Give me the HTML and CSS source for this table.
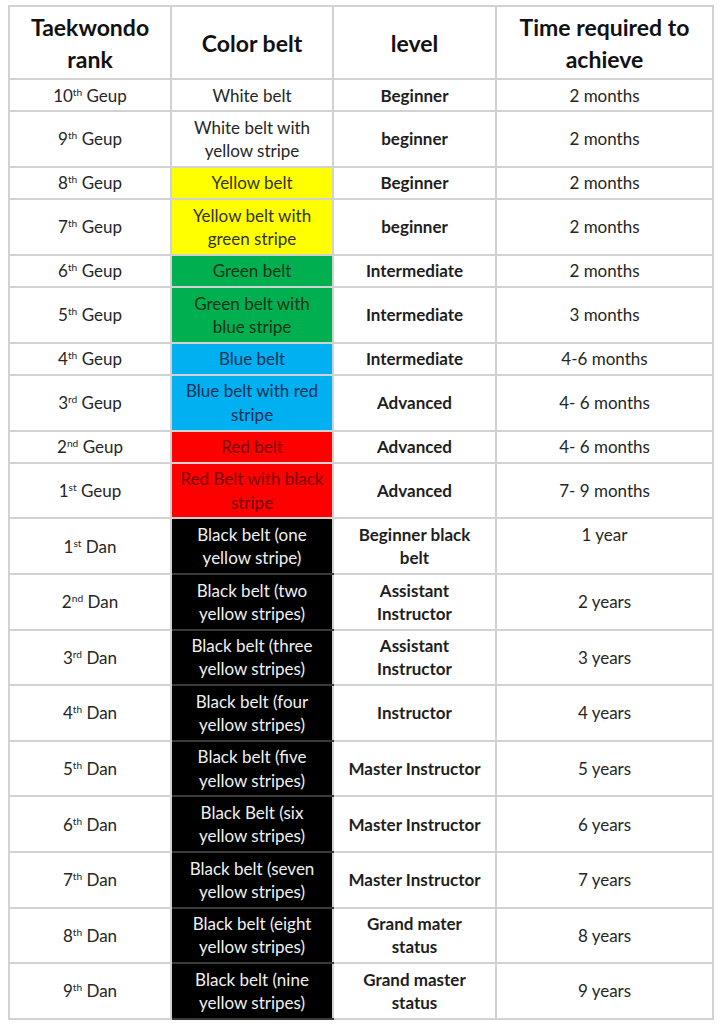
FILE: index.html
```html
<!DOCTYPE html>
<html lang="en">
<head>
<meta charset="utf-8">
<title>Taekwondo belt ranks</title>
<link rel="stylesheet" href="styles.css">
</head>
<body>
<table class="ranks">
  <colgroup>
    <col class="c-rank">
    <col class="c-belt">
    <col class="c-level">
    <col class="c-time">
  </colgroup>
  <thead>
    <tr>
      <th>Taekwondo<br>rank</th>
      <th>Color belt</th>
      <th>level</th>
      <th>Time required to<br>achieve</th>
    </tr>
  </thead>
  <tbody>
    <tr><td>10<sup>th</sup> Geup</td><td class="belt">White belt</td><td class="lvl">Beginner</td><td>2 months</td></tr>
    <tr><td>9<sup>th</sup> Geup</td><td class="belt">White belt with<br>yellow stripe</td><td class="lvl">beginner</td><td>2 months</td></tr>
    <tr><td>8<sup>th</sup> Geup</td><td class="belt yellow">Yellow belt</td><td class="lvl">Beginner</td><td>2 months</td></tr>
    <tr><td>7<sup>th</sup> Geup</td><td class="belt yellow">Yellow belt with<br>green stripe</td><td class="lvl">beginner</td><td>2 months</td></tr>
    <tr><td>6<sup>th</sup> Geup</td><td class="belt green">Green belt</td><td class="lvl">Intermediate</td><td>2 months</td></tr>
    <tr><td>5<sup>th</sup> Geup</td><td class="belt green">Green belt with<br>blue stripe</td><td class="lvl">Intermediate</td><td>3 months</td></tr>
    <tr><td>4<sup>th</sup> Geup</td><td class="belt blue">Blue belt</td><td class="lvl">Intermediate</td><td>4-6 months</td></tr>
    <tr><td>3<sup>rd</sup> Geup</td><td class="belt blue">Blue belt with red<br>stripe</td><td class="lvl">Advanced</td><td>4- 6 months</td></tr>
    <tr><td>2<sup>nd</sup> Geup</td><td class="belt red">Red belt</td><td class="lvl">Advanced</td><td>4- 6 months</td></tr>
    <tr><td>1<sup>st</sup> Geup</td><td class="belt red">Red Belt with black<br>stripe</td><td class="lvl">Advanced</td><td>7- 9 months</td></tr>
    <tr><td>1<sup>st</sup> Dan</td><td class="belt black">Black belt (one<br>yellow stripe)</td><td class="lvl">Beginner black<br>belt</td><td class="top">1 year</td></tr>
    <tr><td>2<sup>nd</sup> Dan</td><td class="belt black">Black belt (two<br>yellow stripes)</td><td class="lvl">Assistant<br>Instructor</td><td>2 years</td></tr>
    <tr><td>3<sup>rd</sup> Dan</td><td class="belt black">Black belt (three<br>yellow stripes)</td><td class="lvl">Assistant<br>Instructor</td><td>3 years</td></tr>
    <tr><td>4<sup>th</sup> Dan</td><td class="belt black">Black belt (four<br>yellow stripes)</td><td class="lvl">Instructor</td><td>4 years</td></tr>
    <tr><td>5<sup>th</sup> Dan</td><td class="belt black">Black belt (five<br>yellow stripes)</td><td class="lvl">Master Instructor</td><td>5 years</td></tr>
    <tr><td>6<sup>th</sup> Dan</td><td class="belt black">Black Belt (six<br>yellow stripes)</td><td class="lvl">Master Instructor</td><td>6 years</td></tr>
    <tr><td>7<sup>th</sup> Dan</td><td class="belt black">Black belt (seven<br>yellow stripes)</td><td class="lvl">Master Instructor</td><td>7 years</td></tr>
    <tr><td>8<sup>th</sup> Dan</td><td class="belt black">Black belt (eight<br>yellow stripes)</td><td class="lvl">Grand mater<br>status</td><td>8 years</td></tr>
    <tr><td>9<sup>th</sup> Dan</td><td class="belt black">Black belt (nine<br>yellow stripes)</td><td class="lvl">Grand master<br>status</td><td>9 years</td></tr>
  </tbody>
</table>
</body>
</html>
```

FILE: styles.css
```css
html, body {
  margin: 0;
  background: #ffffff;
}

body {
  padding: 5px 8px;
  font-family: Lato, "Open Sans", "DejaVu Sans", sans-serif;
  color: #262626;
}

.ranks {
  width: 704px;
  border-collapse: collapse;
  table-layout: fixed;
}

.c-rank { width: 162px; }
.c-belt { width: 162px; }
.c-level { width: 163px; }
.c-time { width: 217px; }

.ranks th,
.ranks td {
  border: 2px solid #d2d2d2;
  text-align: center;
  vertical-align: middle;
  padding: 3.5px 2px;
}

.ranks th {
  font-size: 23px;
  line-height: 32px;
  font-weight: 700;
  color: #111111;
}

.ranks td {
  font-size: 17px;
  line-height: 23.3px;
  font-weight: 400;
}

.ranks td.top {
  vertical-align: top;
}

.ranks sup {
  font-size: 0.6em;
  line-height: 0;
  vertical-align: 0.55em;
}

.ranks td.lvl {
  font-weight: 700;
  color: #1e1e1e;
}

.belt.yellow { background: #ffff00; color: #33330e; }
.belt.green  { background: #00b050; color: #0a3518; }
.belt.blue   { background: #00b0f0; color: #0a3258; }
.belt.red    { background: #ff0000; color: #760000; }
.belt.black  {
  background: #000000;
  color: #f0f0f0;
  border-top-color: #3a3a3a;
  border-bottom-color: #3a3a3a;
}
```
